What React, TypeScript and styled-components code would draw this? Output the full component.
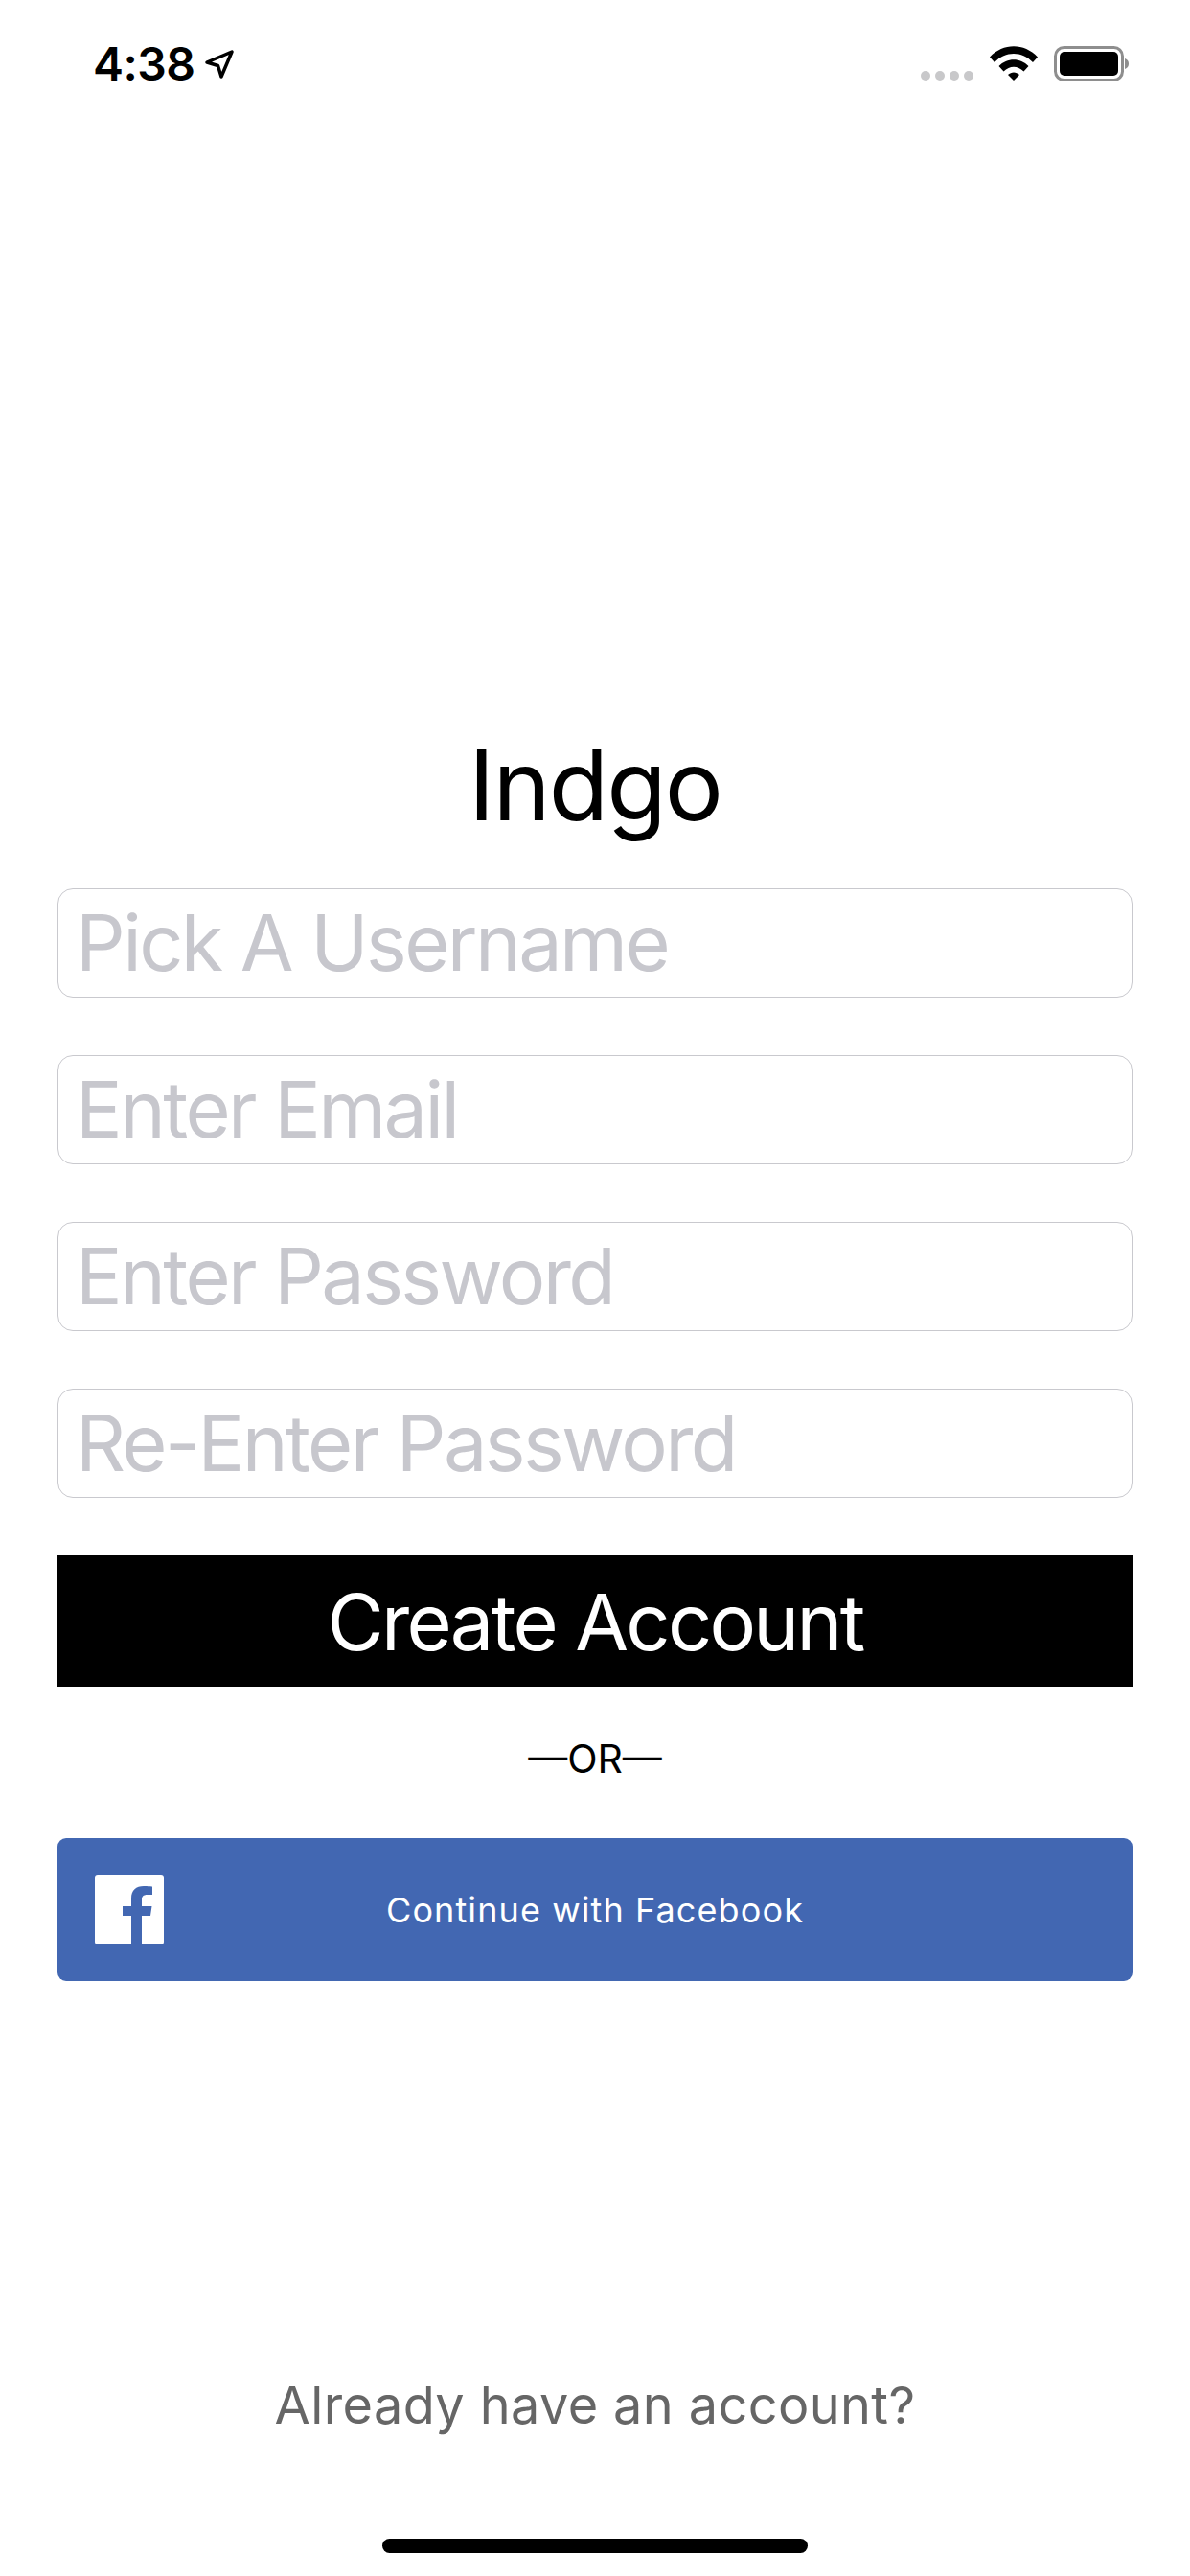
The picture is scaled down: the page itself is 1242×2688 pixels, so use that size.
import React from 'react'
import styled, { createGlobalStyle } from 'styled-components'

const GlobalStyle = createGlobalStyle`
  html, body { margin: 0; padding: 0; background: #fff; }
  body { font-family: Inter, "Liberation Sans", sans-serif; }
`

const Screen = styled.div`
  width: 1242px;
  height: 2688px;
  background: #fff;
  display: flex;
  flex-direction: column;
  overflow: hidden;
`

const StatusBar = styled.div`
  height: 132px;
  box-sizing: border-box;
  padding: 40px 64px 0 97px;
  display: flex;
  align-items: flex-start;
  justify-content: space-between;
`

const Clock = styled.div`
  display: flex;
  align-items: center;
  gap: 9px;
  font-size: 48px;
  line-height: 54px;
  font-weight: 600;
  letter-spacing: -0.5px;
  color: #000;
`

const StatusIcons = styled.div`
  display: flex;
  align-items: flex-start;
  gap: 17px;
  padding-top: 8px;
`

const Dots = styled.div`
  display: flex;
  gap: 5px;
  margin-top: 26px;
`

const Dot = styled.span`
  width: 10px;
  height: 10px;
  border-radius: 50%;
  background: #c8c8ca;
`

const Form = styled.main`
  flex: 1;
  padding: 621px 60px 0;
  display: flex;
  flex-direction: column;
`

const Title = styled.h1`
  margin: 0 0 41px;
  height: 133px;
  font-size: 102px;
  line-height: 133px;
  font-weight: 400;
  letter-spacing: -2px;
  text-align: center;
  color: #000;
`

const Input = styled.input`
  display: block;
  box-sizing: border-box;
  width: 100%;
  height: 114px;
  margin-bottom: 60px;
  padding: 0 18px;
  background: #fff;
  border: 1px solid #c9c9ce;
  border-radius: 16px;
  outline: none;
  font-family: inherit;
  font-size: 81px;
  font-weight: 400;
  letter-spacing: -2.6px;

  &::placeholder {
    color: #c7c7cd;
    opacity: 1;
  }
`

const CreateButton = styled.button`
  display: block;
  width: 100%;
  height: 137px;
  border: 0;
  padding: 3px 0 0;
  background: #000;
  color: #fff;
  font-family: inherit;
  font-size: 81px;
  font-weight: 400;
  letter-spacing: -2.7px;
`

const OrLabel = styled.div`
  height: 158px;
  padding-bottom: 8px;
  box-sizing: border-box;
  display: flex;
  align-items: center;
  justify-content: center;
  font-size: 41px;
  color: #000;
`

const FacebookButton = styled.button`
  position: relative;
  display: flex;
  align-items: center;
  justify-content: center;
  width: 100%;
  height: 149px;
  border: 0;
  padding: 0;
  border-radius: 9px;
  background: #4267b2;
  color: #fff;
  font-family: inherit;
  font-size: 36px;
  letter-spacing: 1.1px;
`

const FacebookMark = styled.svg`
  position: absolute;
  left: 39px;
  top: 39px;
`

const SignInLink = styled.div`
  margin-top: 402px;
  height: 80px;
  display: flex;
  align-items: center;
  justify-content: center;
  font-size: 54px;
  letter-spacing: 0.4px;
  color: #666;
`

const HomeBar = styled.div`
  width: 444px;
  height: 15px;
  margin: 0 auto 24px;
  border-radius: 8px;
  background: #000;
`

const fields = ['Pick A Username', 'Enter Email', 'Enter Password', 'Re-Enter Password']

export default function App() {
  return (
    <>
      <GlobalStyle />
      <Screen>
        <StatusBar>
          <Clock>
            4:38
            <svg width="32" height="32" viewBox="0 0 32 32" fill="none">
              <path d="M3 14 L29 3 L18 29 L14.5 17.5 Z" stroke="#000" strokeWidth="3.5" strokeLinejoin="round" />
            </svg>
          </Clock>
          <StatusIcons>
            <Dots>
              <Dot /><Dot /><Dot /><Dot />
            </Dots>
            <svg width="50" height="36" viewBox="0 0 50 36">
              <path d="M0 11.5 C14 -3.5 36 -3.5 50 11.5 L45 17 C33.5 5 16.5 5 5 17 Z" fill="#000" />
              <path d="M9.5 21 C18 12 32 12 40.5 21 L35.5 26.5 C29 20 21 20 14.5 26.5 Z" fill="#000" />
              <path d="M19 30 C22.5 26.5 27.5 26.5 31 30 L25 36 Z" fill="#000" />
            </svg>
            <svg width="78" height="37" viewBox="0 0 78 37">
              <rect x="1.5" y="1.5" width="70" height="34" rx="9" fill="none" stroke="#8e8e8e" strokeWidth="3" />
              <rect x="6" y="6" width="61" height="25" rx="5" fill="#000" />
              <path d="M74 13 C77 14 78 16 78 18.5 C78 21 77 23 74 24 Z" fill="#8e8e8e" />
            </svg>
          </StatusIcons>
        </StatusBar>
        <Form>
          <Title>Indgo</Title>
          {fields.map((field) => (
            <Input key={field} placeholder={field} readOnly />
          ))}
          <CreateButton>Create Account</CreateButton>
          <OrLabel>—OR—</OrLabel>
          <FacebookButton>
            <FacebookMark width="72" height="72" viewBox="0 0 72 72">
              <rect width="72" height="72" rx="3" fill="#fff" />
              <path
                d="M38 72 V42 H29 V32 H38 V24 C38 15 43 11 51 11 C55 11 60 11.5 60 11.5 V20 H55 C50 20 49 22 49 26 V32 H59.5 L58 42 H49 V72 Z"
                fill="#4267b2"
              />
            </FacebookMark>
            Continue with Facebook
          </FacebookButton>
          <SignInLink>Already have an account?</SignInLink>
        </Form>
        <HomeBar />
      </Screen>
    </>
  )
}
